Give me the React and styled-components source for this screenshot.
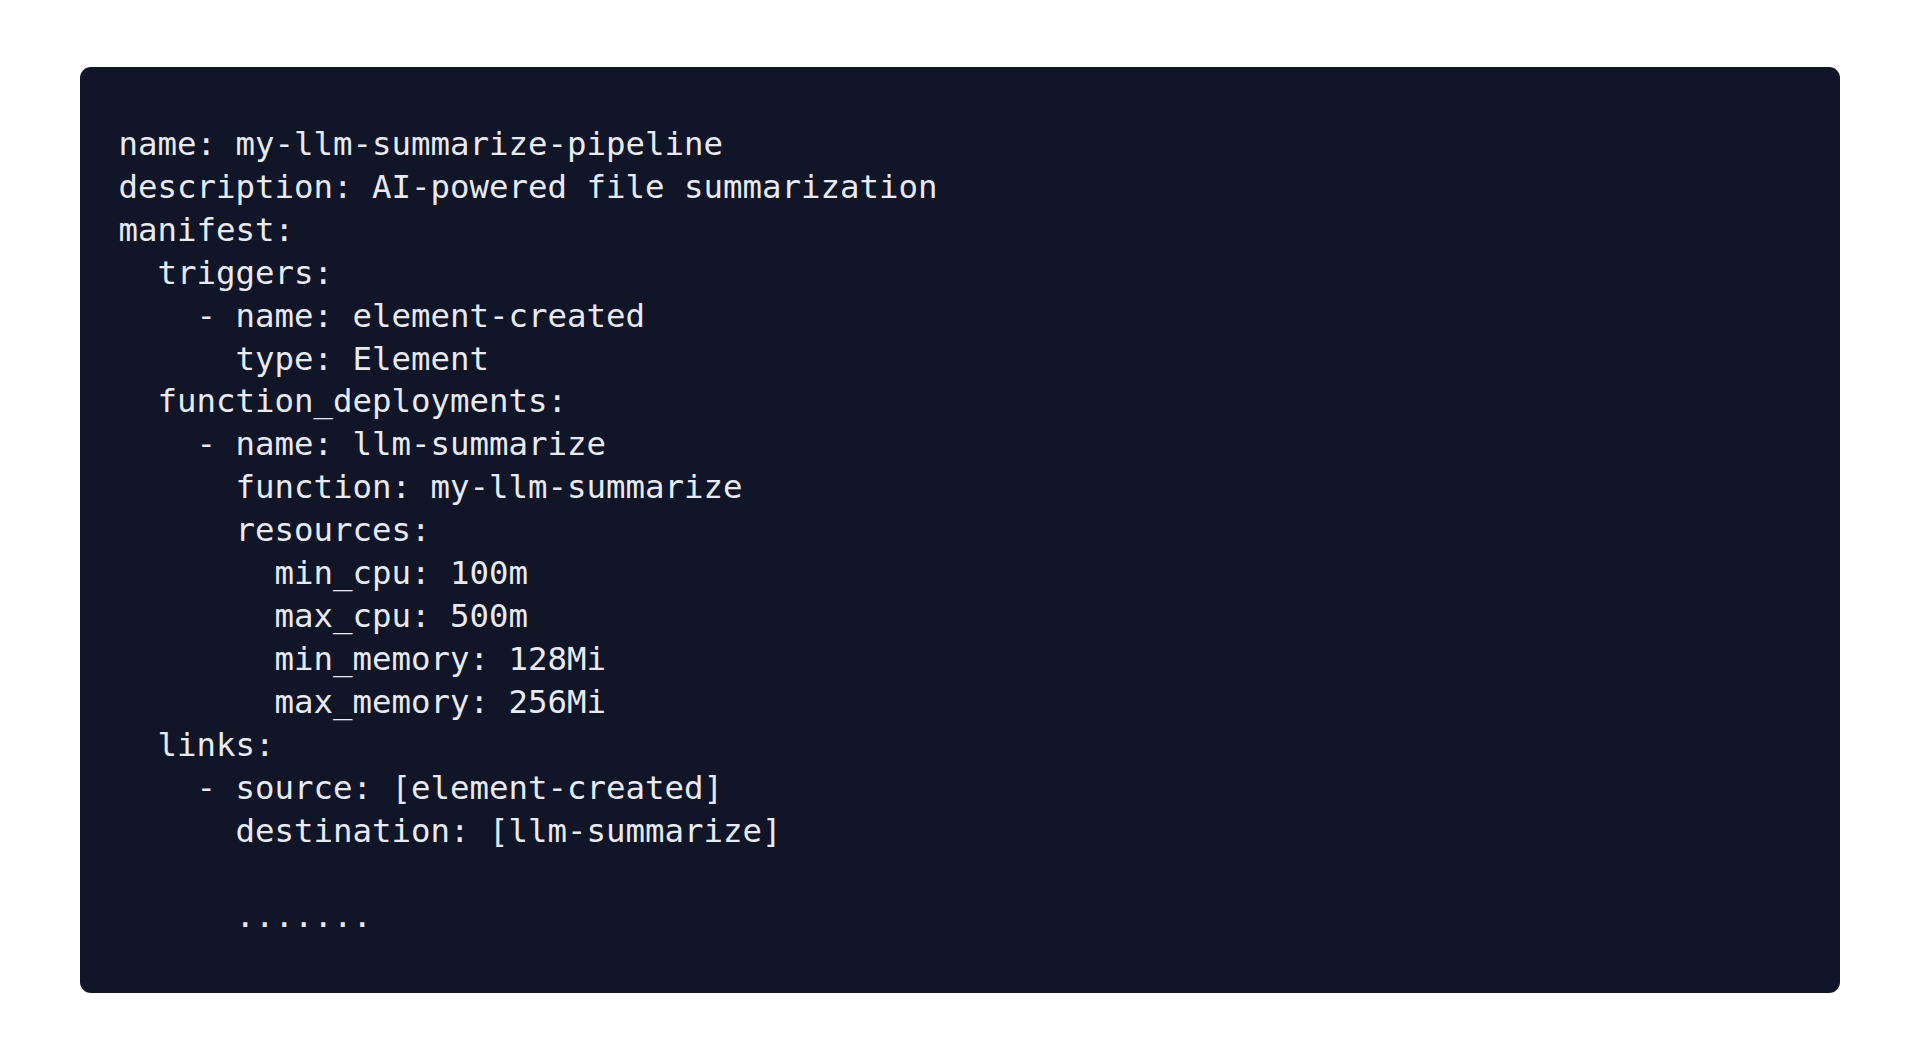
import React from "react";
import styled, { createGlobalStyle } from "styled-components";

const Global = createGlobalStyle`
  html, body { margin: 0; padding: 0; background: #ffffff; }
  body { font-family: "DejaVu Sans Mono", "Liberation Mono", monospace; }
`;

const Page = styled.div`
  padding: 67px 80px 68px 80px;
  box-sizing: border-box;
  width: 1920px;
`;

const CodeCard = styled.div`
  background: #111528;
  border-radius: 11px;
  padding: 56px 40px 55px 38.5px;
  box-sizing: border-box;
`;

const Code = styled.pre`
  margin: 0;
  font-family: "DejaVu Sans Mono", "Liberation Mono", monospace;
  font-size: 32.4px;
  line-height: 42.9px;
  color: #e8eaf0;
  white-space: pre;
`;

const yaml = `name: my-llm-summarize-pipeline
description: AI-powered file summarization
manifest:
  triggers:
    - name: element-created
      type: Element
  function_deployments:
    - name: llm-summarize
      function: my-llm-summarize
      resources:
        min_cpu: 100m
        max_cpu: 500m
        min_memory: 128Mi
        max_memory: 256Mi
  links:
    - source: [element-created]
      destination: [llm-summarize]

      .......`;

export default function App() {
  return (
    <>
      <Global />
      <Page>
        <CodeCard>
          <Code>{yaml}</Code>
        </CodeCard>
      </Page>
    </>
  );
}
